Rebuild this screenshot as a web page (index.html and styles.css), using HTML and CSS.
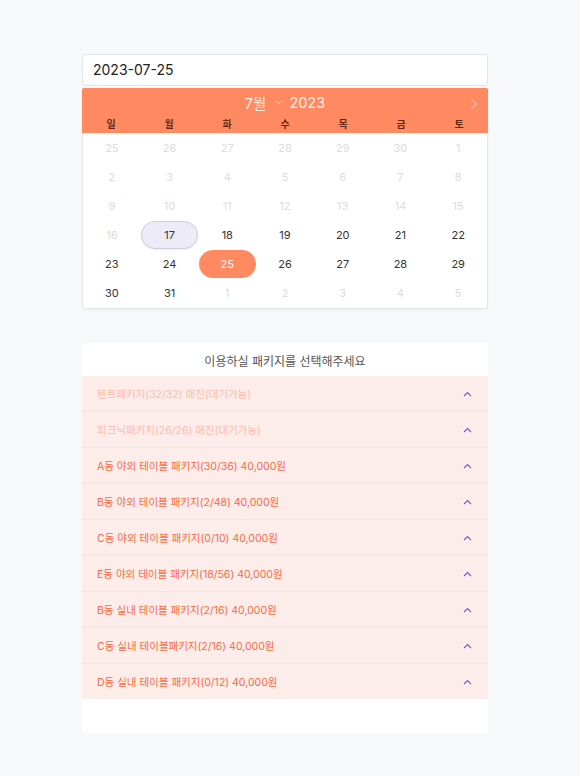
FILE: index.html
```html
<!DOCTYPE html>
<html lang="ko">
<head>
  <meta charset="UTF-8" />
  <meta name="viewport" content="width=device-width, initial-scale=1.0"/>
  <title>패키지 예약</title>
  <link rel="stylesheet" href="styles.css">
</head>
<body>

  <div class="wrap">

    <!-- 날짜 입력 -->
    <div class="date-input">2023-07-25</div>

    <!-- 달력 -->
    <div class="calendar">
      <div class="cal-head">
        <div class="cal-title">
          <span class="month">7월</span>
          <svg class="caret" width="7" height="5" viewBox="0 0 7 5"><path d="M1 1.2 L3.5 3.7 L6 1.2" fill="none" stroke="currentColor" stroke-width="1"/></svg>
          <span class="year">2023</span>
          <svg class="next" width="8" height="12" viewBox="0 0 8 12"><path d="M1.5 1 L6.5 6 L1.5 11" fill="none" stroke="currentColor" stroke-width="1"/></svg>
        </div>
        <div class="weekdays">
          <span>일</span><span>월</span><span>화</span><span>수</span><span>목</span><span>금</span><span>토</span>
        </div>
      </div>
      <div class="days" id="days"></div>
    </div>

    <!-- 패키지 목록 -->
    <div class="packages">
      <div class="pkg-title">이용하실 패키지를 선택해주세요</div>
      <div id="pkg-list"></div>
      <div class="pkg-foot"></div>
    </div>

  </div>

  <script>
    (function () {
      var cells = [
        [25, 'off'], [26, 'off'], [27, 'off'], [28, 'off'], [29, 'off'], [30, 'off'], [1, 'off'],
        [2, 'off'], [3, 'off'], [4, 'off'], [5, 'off'], [6, 'off'], [7, 'off'], [8, 'off'],
        [9, 'off'], [10, 'off'], [11, 'off'], [12, 'off'], [13, 'off'], [14, 'off'], [15, 'off'],
        [16, 'off'], [17, 'today'], [18, ''], [19, ''], [20, ''], [21, ''], [22, ''],
        [23, ''], [24, ''], [25, 'selected'], [26, ''], [27, ''], [28, ''], [29, ''],
        [30, ''], [31, ''], [1, 'off'], [2, 'off'], [3, 'off'], [4, 'off'], [5, 'off']
      ];
      var html = '';
      cells.forEach(function (c) {
        html += '<div class="day ' + c[1] + '"><span>' + c[0] + '</span></div>';
      });
      document.getElementById('days').innerHTML = html;

      var packages = [
        ['텐트패키지(32/32) 매진(대기가능)', true],
        ['피크닉패키지(26/26) 매진(대기가능)', true],
        ['A동 야외 테이블 패키지(30/36) 40,000원', false],
        ['B동 야외 테이블 패키지(2/48) 40,000원', false],
        ['C동 야외 테이블 패키지(0/10) 40,000원', false],
        ['E동 야외 테이블 패키지(18/56) 40,000원', false],
        ['B동 실내 테이블 패키지(2/16) 40,000원', false],
        ['C동 실내 테이블패키지(2/16) 40,000원', false],
        ['D동 실내 테이블 패키지(0/12) 40,000원', false]
      ];
      var list = '';
      packages.forEach(function (p) {
        list += '<div class="pkg' + (p[1] ? ' sold' : '') + '">' +
          '<span class="pkg-name">' + p[0] + '</span>' +
          '<svg class="chev" width="9" height="6" viewBox="0 0 9 6"><path d="M1 5 L4.5 1.5 L8 5" fill="none" stroke="currentColor" stroke-width="1.1"/></svg>' +
          '</div>';
      });
      document.getElementById('pkg-list').innerHTML = list;
    })();
  </script>

</body>
</html>
```

FILE: styles.css
```css
body {
  background-color: #f7f8fa;
  color: #333;
  font-family: Inter, "Noto Sans CJK KR", sans-serif;
  margin: 0;
}

.wrap {
  width: 406px;
  margin-left: 82px;
  padding-top: 54px;
  padding-bottom: 42px;
}

/* 날짜 입력 */
.date-input {
  height: 30px;
  line-height: 30px;
  background: #fff;
  border: 1px solid #e3e5ea;
  border-radius: 3px;
  padding: 0 10px;
  font-size: 14px;
  color: #222;
}

/* 달력 */
.calendar {
  margin-top: 2px;
  background: #fff;
  border: 1px solid #e3e5ea;
  border-top: none;
  border-radius: 0 0 3px 3px;
  box-shadow: 0 1px 2px rgba(0, 0, 0, 0.04);
}

.cal-head {
  background-color: #ff8a61;
  height: 45px;
  margin: 0 -1px;
  border-radius: 2px 2px 0 0;
}

.cal-title {
  position: relative;
  display: flex;
  justify-content: center;
  align-items: center;
  height: 26px;
  padding-top: 1px;
  color: rgba(255, 255, 255, 0.9);
  font-size: 14.5px;
}

.cal-title .caret {
  margin: 0 7px 0 9px;
}

.cal-title .next {
  position: absolute;
  right: 10px;
  top: 10px;
  color: rgba(255, 255, 255, 0.75);
}

.weekdays {
  display: grid;
  grid-template-columns: repeat(7, 1fr);
  text-align: center;
  font-size: 10px;
  font-weight: 700;
  color: rgba(70, 20, 5, 0.85);
  padding-top: 1px;
}

.days {
  display: grid;
  grid-template-columns: repeat(7, 1fr);
  padding-bottom: 1px;
}

.day {
  height: 29px;
  display: flex;
  justify-content: center;
  align-items: center;
  font-size: 11px;
  color: #333;
}

.day.off {
  color: #dcdcdc;
}

.day span {
  display: flex;
  justify-content: center;
  align-items: center;
  width: 57px;
  height: 28px;
  border-radius: 14px;
  box-sizing: border-box;
}

.day.today span {
  background: #ecebf7;
  border: 1px solid #cfcfdc;
  box-shadow: 0 1px 2px rgba(0, 0, 0, 0.08);
}

.day.selected span {
  background: #ff8a61;
  color: #fff;
}

/* 패키지 */
.packages {
  margin-top: 34px;
  background: #fff;
  border-radius: 3px;
}

.pkg-title {
  height: 33px;
  line-height: 37px;
  text-align: center;
  font-size: 12px;
  color: #555;
}

.pkg {
  display: flex;
  justify-content: space-between;
  align-items: center;
  height: 35px;
  border-top: 1px solid #f7e2df;
  background: #fdedea;
  padding: 0 16px 0 15px;
  font-size: 10.5px;
  color: #f36c46;
}

.pkg:first-child {
  border-top: none;
  height: 35px;
}

.pkg.sold .pkg-name {
  color: #f9bcaf;
}

.pkg .chev {
  color: #6b5bd6;
}

.pkg-foot {
  height: 34px;
}
```
